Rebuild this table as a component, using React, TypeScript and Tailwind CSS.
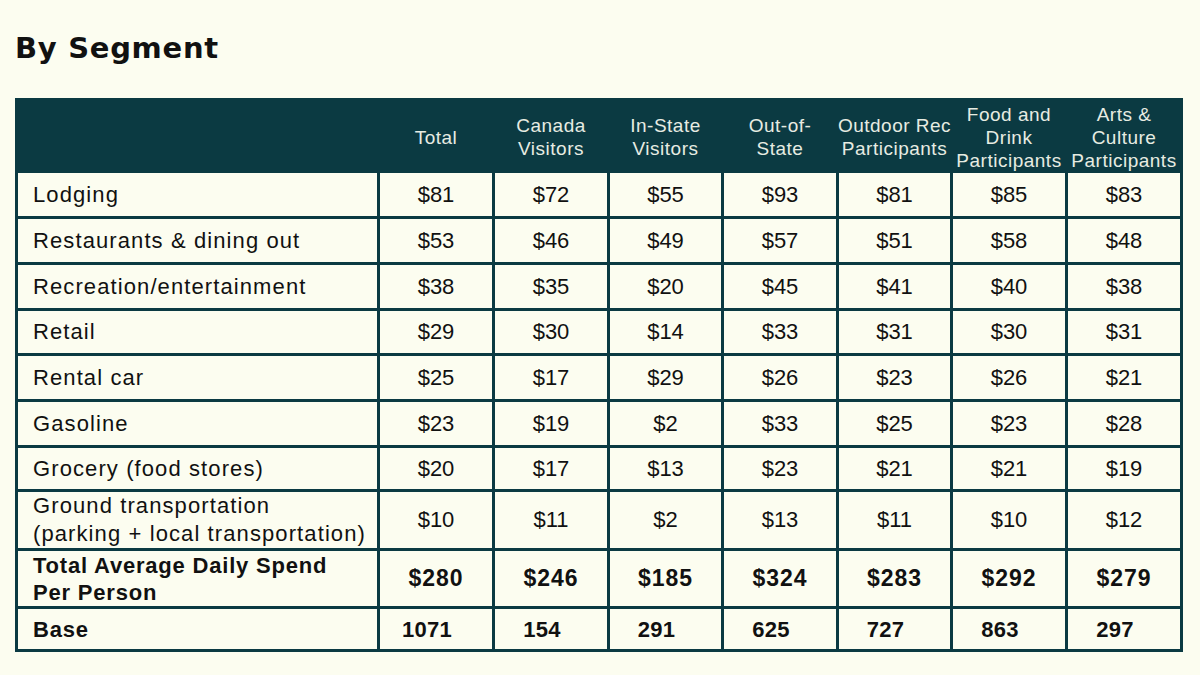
const HEADERS: string[][] = [
  ["Total"],
  ["Canada", "Visitors"],
  ["In-State", "Visitors"],
  ["Out-of-", "State"],
  ["Outdoor Rec", "Participants"],
  ["Food and", "Drink", "Participants"],
  ["Arts &", "Culture", "Participants"],
];

const ROWS: { label: string[]; values: number[] }[] = [
  { label: ["Lodging"], values: [81, 72, 55, 93, 81, 85, 83] },
  { label: ["Restaurants & dining out"], values: [53, 46, 49, 57, 51, 58, 48] },
  { label: ["Recreation/entertainment"], values: [38, 35, 20, 45, 41, 40, 38] },
  { label: ["Retail"], values: [29, 30, 14, 33, 31, 30, 31] },
  { label: ["Rental car"], values: [25, 17, 29, 26, 23, 26, 21] },
  { label: ["Gasoline"], values: [23, 19, 2, 33, 25, 23, 28] },
  { label: ["Grocery (food stores)"], values: [20, 17, 13, 23, 21, 21, 19] },
  {
    label: ["Ground transportation", "(parking + local transportation)"],
    values: [10, 11, 2, 13, 11, 10, 12],
  },
];

const TOTALS = [280, 246, 185, 324, 283, 292, 279];
const BASE = [1071, 154, 291, 625, 727, 863, 297];

const cell = "bg-[#fcfdf0] flex items-center";
const font = "font-['Liberation_Sans',Arial,sans-serif]";

export default function App() {
  return (
    <div className={`h-[675px] w-full bg-[#fcfdf0] text-[#111111] ${font}`}>
      <h1 className="pl-[15px] pt-[34px] font-['DejaVu_Sans',sans-serif] text-[29px] font-bold leading-[29px] tracking-[0.7px]">
        By Segment
      </h1>

      <div className="ml-[15px] mt-[35px] grid w-[1168px] grid-cols-[359px_112px_112px_111px_112px_111px_112px_112px] grid-rows-[69px_43px_43px_43px_42px_43px_43px_41px_56px_55px_40px] gap-[3px] bg-[#0b3a42] p-[3px]">
        <div className="bg-[#0b3a42]" />
        {HEADERS.map((lines) => (
          <div
            key={lines.join(" ")}
            className="flex flex-col items-center justify-center whitespace-nowrap bg-[#0b3a42] pt-[3px] text-center text-[19px] leading-[23px] tracking-[0.5px] text-[#e7ece2]"
          >
            {lines.map((l) => (
              <span key={l}>{l}</span>
            ))}
          </div>
        ))}

        {ROWS.map((row) => (
          <Row key={row.label[0]} label={row.label} values={row.values} />
        ))}

        <div className={`${cell} pl-[15px] text-[22px] font-bold leading-[27px] tracking-[0.8px]`}>
          <div>
            Total Average Daily Spend
            <br />
            Per Person
          </div>
        </div>
        {TOTALS.map((v, i) => (
          <div key={i} className={`${cell} justify-center text-[23px] font-bold tracking-[1px]`}>
            ${v}
          </div>
        ))}

        <div className={`${cell} pl-[15px] text-[22px] font-bold tracking-[0.8px]`}>Base</div>
        {BASE.map((v, i) => (
          <div key={i} className={`${cell} justify-center pr-[18px] text-[22px] font-bold tracking-[0.3px]`}>
            {v}
          </div>
        ))}
      </div>
    </div>
  );
}

function Row({ label, values }: { label: string[]; values: number[] }) {
  return (
    <>
      <div className={`${cell} pl-[15px] text-[22px] leading-[28px] tracking-[1.1px]`}>
        <div>
          {label.map((l) => (
            <div key={l} className="whitespace-nowrap">
              {l}
            </div>
          ))}
        </div>
      </div>
      {values.map((v, i) => (
        <div key={i} className={`${cell} justify-center text-[22px] leading-[28px]`}>
          ${v}
        </div>
      ))}
    </>
  );
}
